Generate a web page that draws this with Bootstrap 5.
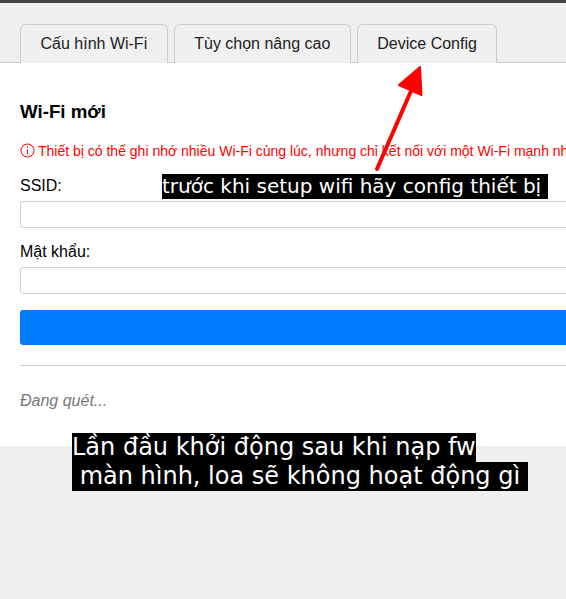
<!DOCTYPE html>
<html lang="vi">
<head>
<meta charset="utf-8">
<title>Wi-Fi</title>
<link href="https://cdn.jsdelivr.net/npm/bootstrap@5.3.0/dist/css/bootstrap.min.css" rel="stylesheet">
<style>
html,body{height:599px;overflow:hidden}
body{background:#efefef;font-family:"Liberation Sans",Arial,sans-serif;font-size:16px;color:#000;position:relative;border-top:3px solid #444}
.tabrow{padding:21px 20px 0;gap:6px;height:60px;border-bottom:1px solid #ccc}
.tabitem{height:39px;padding:0 19.5px;border:1px solid #ccc;border-bottom:0;border-radius:6px 6px 0 0;background:#f0f0f0;color:#222;line-height:38px;font-size:16px;white-space:nowrap}
.panel{background:#fff;width:640px;height:383px;padding:38px 20px 0}
.ttl{font-size:18.72px;font-weight:700;line-height:22px;margin:0 0 20px}
.warn{color:#f00;font-size:14px;line-height:17px;white-space:nowrap;margin-bottom:17px}
.warn svg{vertical-align:-2px;margin-right:3px}
.lbl{display:block;font-size:16px;line-height:18px;margin-bottom:6px}
.inp{display:block;width:100%;height:27px;border:1px solid #ccc;border-radius:3px;margin-bottom:15px;background:#fff;padding:0 8px}
.bluebtn{height:35px;width:100%;background:#007bff;border:0;border-radius:3px;display:block;margin-top:16px}
.rule{border-top:1px solid #ccc;margin:20px 0 25px;opacity:1}
.scan{font-style:italic;color:#777;line-height:20px}
.cap{position:absolute;font-family:"DejaVu Sans",sans-serif;color:#fff;background:#000;white-space:pre}
.capsm{left:162px;top:171px;line-height:25px;font-size:20px}
.capbig{left:72px;line-height:29px;font-size:24px}
.capa{top:430px}
.capb{top:459px}
.arrow{position:absolute;left:0;top:-3px}
</style>
</head>
<body>
<div class="tabrow d-flex">
<div class="tabitem">Cấu hình Wi-Fi</div>
<div class="tabitem">Tùy chọn nâng cao</div>
<div class="tabitem">Device Config</div>
</div>
<div class="panel">
<h2 class="ttl">Wi-Fi mới</h2>
<div class="warn"><svg width="15" height="15" viewBox="0 0 15 15" fill="none" stroke="#f00"><circle cx="7.5" cy="7.5" r="6.5"/><path d="M7.5 6.5v5M7.5 3.5v1.5"/></svg>Thiết bị có thể ghi nhớ nhiều Wi-Fi cùng lúc, nhưng chỉ kết nối với một Wi-Fi mạnh nhất</div>
<label class="lbl" for="s">SSID:</label>
<input class="inp" id="s" type="text">
<label class="lbl" for="p">Mật khẩu:</label>
<input class="inp" id="p" type="text">
<button class="bluebtn" type="button"></button>
<hr class="rule">
<div class="scan">Đang quét...</div>
</div>
<svg class="arrow" width="566" height="599" viewBox="0 0 566 599"><path d="M377 169 L411 91" stroke="#f00" stroke-width="4" stroke-linecap="round"/><path d="M420 67 L399 85 L421.500 95 Z" fill="#f00" stroke="#f00" stroke-width="2" stroke-linejoin="round"/></svg>
<div class="cap capsm">trước khi setup wifi hãy config thiết bị </div>
<div class="cap capbig capa">Lần đầu khởi động sau khi nạp fw</div>
<div class="cap capbig capb"> màn hình, loa sẽ không hoạt động gì </div>
</body>
</html>
